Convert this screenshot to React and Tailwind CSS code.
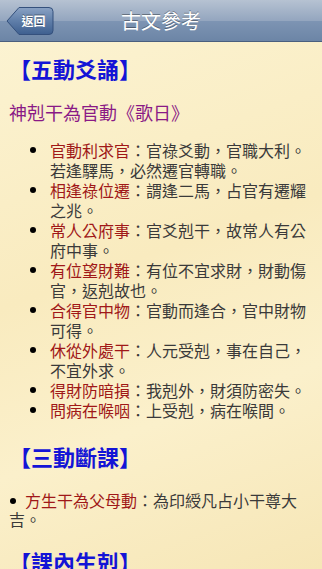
import React from "react";

const items = [
  ["官動利求官", "官祿爻動，官職大利。若逢驛馬，必然遷官轉職。"],
  ["相逢祿位遷", "謂逢二馬，占官有遷耀之兆。"],
  ["常人公府事", "官爻剋干，故常人有公府中事。"],
  ["有位望財難", "有位不宜求財，財動傷官，返剋故也。"],
  ["合得官中物", "官動而逢合，官中財物可得。"],
  ["休從外處干", "人元受剋，事在自己，不宜外求。"],
  ["得財防暗損", "我剋外，財須防密失。"],
  ["問病在喉咽", "上受剋，病在喉間。"],
];

function BackButton() {
  return (
    <div className="relative w-[48px] h-[30px] ml-[6px] flex items-center justify-center">
      <svg className="absolute inset-0" width="48" height="30" viewBox="0 0 48 30">
        <defs>
          <linearGradient id="bb" x1="0" y1="0" x2="0" y2="1">
            <stop offset="0" stopColor="#8aa2c4" />
            <stop offset="0.5" stopColor="#5f7ea9" />
            <stop offset="1" stopColor="#3e5f8f" />
          </linearGradient>
        </defs>
        <path
          d="M1 15 L13 1.5 L43 1.5 Q47 1.5 47 5.5 L47 24.5 Q47 28.5 43 28.5 L13 28.5 Z"
          fill="url(#bb)"
          stroke="#34507c"
          strokeWidth="1"
        />
      </svg>
      <span className="relative pl-[7px] text-[12px] font-bold text-white leading-none [text-shadow:0_-1px_0_rgba(0,0,0,0.4)]">
        返回
      </span>
    </div>
  );
}

export default function App() {
  return (
    <div
      className="w-[322px] h-[569px] overflow-hidden bg-[linear-gradient(160deg,#fcf4d4_0%,#f9ebbf_45%,#fbf0cb_70%,#f6e6b6_100%)]"
      style={{ fontFamily: '"Noto Sans CJK TC", "Noto Sans CJK SC", "Liberation Sans", sans-serif' }}
    >
      <div className="relative h-[42px] flex items-center bg-[linear-gradient(to_bottom,#b6c2d2_0%,#94a6bf_50%,#7d94b3_52%,#6c85a6_100%)] border-b border-[#4a5f7e]">
        <BackButton />
        <div className="absolute left-0 right-0 top-0 h-[42px] flex items-center justify-center pointer-events-none">
          <span className="text-[20px] text-white leading-none [text-shadow:0_-1px_0_rgba(0,0,0,0.35)]">古文參考</span>
        </div>
      </div>

      <div className="px-[9px]">
        <h2 className="mt-[12px] text-[22px] leading-[28px] font-bold text-[#1414d6]">【五動爻誦】</h2>
        <h3 className="mt-[18px] text-[18px] leading-[24px] text-[#8a1a86]">神剋干為官動《歌日》</h3>
        <ul className="mt-[16px] ml-[21px] flex flex-col">
          {items.map(([t, d], i) => (
            <li key={i} className="flex text-[16px] leading-[20px]">
              <span className="mt-[7px] w-[6px] h-[6px] shrink-0 rounded-full bg-black" />
              <span className="ml-[14px] flex-1 text-[#3a3a3a]">
                <span className="text-[#a01818]">{t}</span>：{d}
              </span>
            </li>
          ))}
        </ul>
        <h2 className="mt-[22px] text-[22px] leading-[28px] font-bold text-[#1414d6]">【三動斷課】</h2>
        <p className="mt-[21px] text-[16px] leading-[19px] text-[#3a3a3a]">
          <span className="inline-block align-middle mb-[3px] ml-[1px] w-[6px] h-[6px] rounded-full bg-black" />
          <span className="inline-block w-[9px]" />
          <span className="text-[#a01818]">方生干為父母動</span>：為印綬凡占小干尊大吉。
        </p>
        <h2 className="mt-[18px] text-[22px] leading-[28px] font-bold text-[#1414d6]">【課內生剋】</h2>
      </div>
    </div>
  );
}
